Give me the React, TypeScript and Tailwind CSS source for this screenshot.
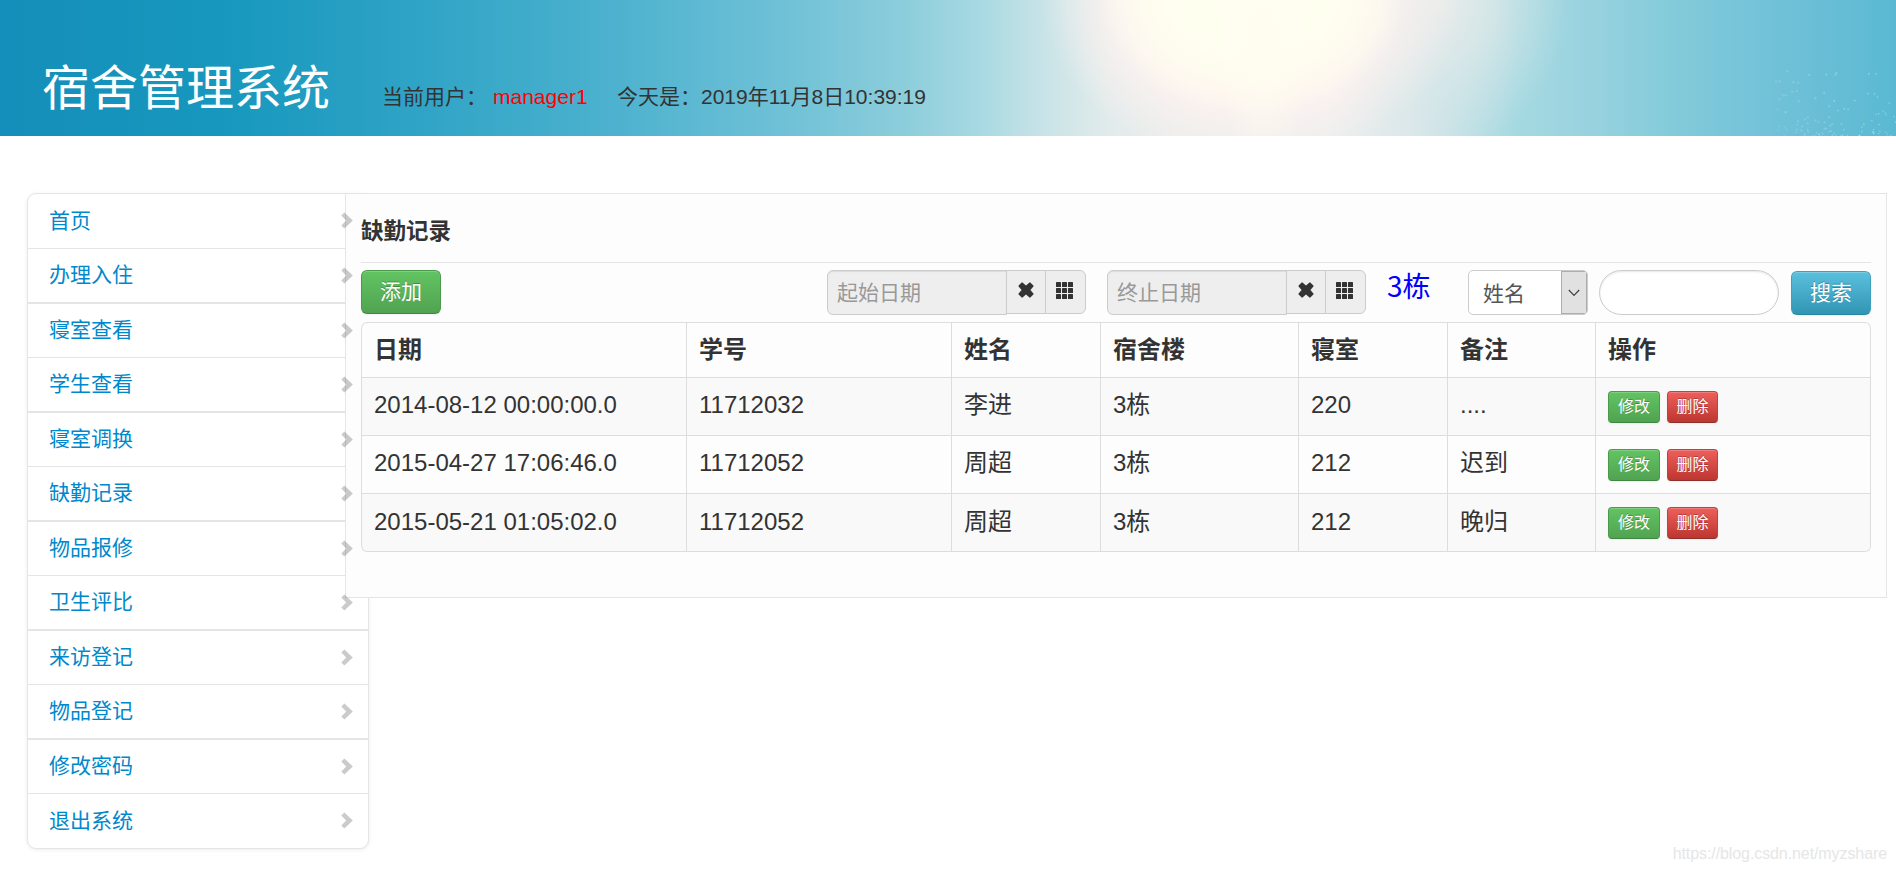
import React from 'react';

const menuItems = [
  '首页', '办理入住', '寝室查看', '学生查看', '寝室调换', '缺勤记录',
  '物品报修', '卫生评比', '来访登记', '物品登记', '修改密码', '退出系统',
];

const records = [
  { date: '2014-08-12 00:00:00.0', no: '11712032', name: '李进', building: '3栋', room: '220', note: '....' },
  { date: '2015-04-27 17:06:46.0', no: '11712052', name: '周超', building: '3栋', room: '212', note: '迟到' },
  { date: '2015-05-21 01:05:02.0', no: '11712052', name: '周超', building: '3栋', room: '212', note: '晚归' },
];

const columns = ['日期', '学号', '姓名', '宿舍楼', '寝室', '备注', '操作'];

// Water spray in the lower right corner of the banner
const spray = Array.from({ length: 150 }, (_, i) => {
  const a = Math.abs((Math.sin(i * 12.9898) * 43758.5453) % 1);
  const b = Math.abs((Math.sin(i * 78.233) * 12543.123) % 1);
  const y = 137 - b * b * b * b * 66;
  return { x: 1896 - a * 120, y, r: 0.7 + a * b * 0.8, o: 0.15 + (1 - a) * 0.4 };
});

const BannerArt = () => (
  <svg className="absolute inset-0" width="1896" height="136" viewBox="0 0 1896 136">
    <defs>
      <linearGradient id="sky" gradientUnits="userSpaceOnUse" x1="0" y1="0" x2="1896" y2="0">
        <stop offset="0" stopColor="#148eba" />
        <stop offset="0.12" stopColor="#1898be" />
        <stop offset="0.2" stopColor="#2aa1c4" />
        <stop offset="0.32" stopColor="#4bb1ce" />
        <stop offset="0.42" stopColor="#72c2d7" />
        <stop offset="0.475" stopColor="#8bcddb" />
        <stop offset="0.51" stopColor="#a2d7e1" />
        <stop offset="0.55" stopColor="#c8e3e7" />
        <stop offset="0.585" stopColor="#e2ebeb" />
        <stop offset="0.62" stopColor="#eaedec" />
        <stop offset="0.7" stopColor="#eceeee" />
        <stop offset="0.745" stopColor="#dce8ea" />
        <stop offset="0.775" stopColor="#bfe0e5" />
        <stop offset="0.8" stopColor="#a5d9e1" />
        <stop offset="0.84" stopColor="#98d2df" />
        <stop offset="0.88" stopColor="#84cbda" />
        <stop offset="0.92" stopColor="#76c4d9" />
        <stop offset="0.96" stopColor="#69bed6" />
        <stop offset="1" stopColor="#5ab9d2" />
      </linearGradient>
      <radialGradient id="sun">
        <stop offset="0" stopColor="#fffff0" />
        <stop offset="0.5" stopColor="#fffff0" />
        <stop offset="0.8" stopColor="#fffff0" stopOpacity="0.55" />
        <stop offset="1" stopColor="#fffff0" stopOpacity="0" />
      </radialGradient>
      <radialGradient id="glow">
        <stop offset="0" stopColor="#fff3f0" />
        <stop offset="0.6" stopColor="#fff3f0" stopOpacity="0.9" />
        <stop offset="0.8" stopColor="#fff3f0" stopOpacity="0.45" />
        <stop offset="1" stopColor="#fff3f0" stopOpacity="0" />
      </radialGradient>
      <radialGradient id="haze">
        <stop offset="0" stopColor="#e6ebea" />
        <stop offset="0.4" stopColor="#dfe9e9" stopOpacity="0.75" />
        <stop offset="1" stopColor="#d5e6e9" stopOpacity="0" />
      </radialGradient>
      <radialGradient id="beam">
        <stop offset="0" stopColor="#fffcf0" stopOpacity="0.8" />
        <stop offset="1" stopColor="#fffcf0" stopOpacity="0" />
      </radialGradient>
    </defs>
    <rect width="1896" height="136" fill="url(#sky)" />
    <ellipse cx="1440" cy="0" rx="130" ry="150" fill="url(#haze)" />
    <ellipse cx="1252" cy="0" rx="210" ry="165" fill="url(#glow)" />
    <ellipse cx="1252" cy="-10" rx="155" ry="125" fill="url(#sun)" />
    <ellipse cx="1264" cy="60" rx="45" ry="110" fill="url(#beam)" />
    {spray.map((s, i) => (
      <circle key={i} cx={s.x} cy={s.y} r={s.r} fill="#c5ebf2" opacity={s.o} />
    ))}
  </svg>
);

const ChevronIcon = () => (
  <svg width="12" height="17" viewBox="0 0 12 17" className="relative z-20 opacity-20">
    <path d="M0.3 3.6 3.4 0.4 11.8 8.5 3.4 16.6 0.3 13.4 5.2 8.5z" fill="#000" />
  </svg>
);

const RemoveIcon = () => (
  <svg width="16" height="16" viewBox="0 0 16 16">
    <path
      d="M4 1.2 8 4.6 12 1.2 14.8 4 11.4 8 14.8 12 12 14.8 8 11.4 4 14.8 1.2 12 4.6 8 1.2 4z"
      fill="#333"
      stroke="#333"
      strokeWidth="1.6"
      strokeLinejoin="round"
    />
  </svg>
);

const GridIcon = () => (
  <svg width="17" height="17" viewBox="0 0 17 17" fill="#333">
    {[0, 6, 12].map(y => [0, 6, 12].map(x => <rect key={`${x}-${y}`} x={x} y={y} width="5" height="5" rx="0.6" />))}
  </svg>
);

const DateField = ({ placeholder }: { placeholder: string }) => (
  <div className="flex items-start">
    <input
      readOnly
      placeholder={placeholder}
      className="w-[180px] h-[45px] pl-[9px] rounded-l-md border border-[#ccc] bg-[#eee] text-[21px] placeholder:text-[#999] shadow-[inset_0_1px_1px_rgba(0,0,0,0.08)] outline-none"
    />
    <span className="w-10 h-11 -ml-px flex justify-center pt-[11px] border border-[#ccc] bg-[#eee]"><RemoveIcon /></span>
    <span className="w-[41px] h-11 -ml-px flex pl-[10px] pt-[11px] rounded-r-md border border-[#ccc] bg-[#eee]"><GridIcon /></span>
  </div>
);

const buttonBase = 'text-white border [text-shadow:0_-1px_0_rgba(0,0,0,0.25)] shadow-[inset_0_1px_0_rgba(255,255,255,0.2),0_1px_2px_rgba(0,0,0,0.05)]';
const green = 'bg-linear-to-b from-[#62c462] to-[#51a351] border-[#4b9a4b] border-b-[#3f8640]';
const red = 'bg-linear-to-b from-[#ee5f5b] to-[#bd362f] border-[#bb4440] border-b-[#8f2f2b]';
const blue = 'bg-linear-to-b from-[#5bc0de] to-[#2f96b4] border-[#3fa0bd] border-b-[#2a85a0]';

export default function App() {
  return (
    <div className="relative w-[1896px] h-[872px] overflow-hidden bg-white text-[#333] font-['Liberation_Sans','Noto_Sans_CJK_SC',sans-serif]">
      <header className="relative h-[136px]">
        <BannerArt />
        <div className="relative flex items-start pl-[42px] whitespace-nowrap">
          <h1 className="w-[340px] mt-[59px] text-5xl leading-[60px] text-white">宿舍管理系统</h1>
          <p className="w-[111px] mt-[82px] text-[21px] leading-[30px]">当前用户：</p>
          <p className="w-[124px] mt-[82px] text-[21px] leading-[30px] text-[#f00]">manager1</p>
          <p className="mt-[82px] text-[21px] leading-[30px]">今天是：2019年11月8日10:39:19</p>
        </div>
      </header>

      <div className="flex items-start pt-[57px] pl-[27px]">
        {/* Side menu */}
        <ul className="w-[342px] shrink-0 rounded-[9px] border border-[#e5e5e5] bg-white shadow-[0_1px_4px_rgba(0,0,0,0.07)]">
          {menuItems.map((item, i) => (
            <li
              key={item}
              className={`flex items-center justify-between pl-[21px] pr-[15px] pb-px border-[#e5e5e5] text-[21px] text-[#08c] ${
                i === 0 ? 'h-[55px] border-b' : i === 11 ? 'h-[54px]' : i % 2 ? 'h-[55px] border-b-2' : 'h-[54px] border-b'
              }`}
            >
              <a>{item}</a>
              <ChevronIcon />
            </li>
          ))}
        </ul>

        {/* Records panel, slightly over the menu's right edge */}
        <main className="relative z-10 -ml-[24px] w-[1542px] h-[405px] px-[15px] border border-[#e5e5e5] bg-[#fdfdfd]">
          <h2 className="h-[69px] pt-[22px] border-b border-[#e5e5e5] text-[22.5px] leading-[32px] font-bold">缺勤记录</h2>

          <div className="flex items-start pt-[7px] h-[59px]">
            <button className={`w-20 h-11 mr-[386px] rounded-md text-[21px] ${buttonBase} ${green}`}>添加</button>
            <DateField placeholder="起始日期" />
            <div className="w-[21px]" />
            <DateField placeholder="终止日期" />
            <span className="w-[81px] ml-[21px] -mt-px text-[28px] leading-8 text-[#00f] font-['Noto_Sans_CJK_SC',sans-serif]">3栋</span>
            <div className="w-[120px] h-[45px] flex items-stretch rounded-[5px] border border-[#ccc] bg-white overflow-hidden">
              <span className="flex-1 pl-[14px] pt-px text-[21px] leading-[43px] text-[#555]">姓名</span>
              <span className="w-[26px] flex items-center justify-center border border-[#adadad] bg-[#e1e1e1]">
                <svg width="12" height="8" viewBox="0 0 12 8" fill="none" stroke="#444" strokeWidth="1.3">
                  <path d="M0.8 1 6 6.4 11.2 1" />
                </svg>
              </span>
            </div>
            <input className="w-[180px] h-[45px] ml-[11px] px-4 rounded-full border border-[#ccc] bg-white shadow-[inset_0_1px_2px_rgba(0,0,0,0.1)] outline-none" />
            <button className={`w-20 h-11 ml-auto mt-px rounded-md text-[21px] ${buttonBase} ${blue}`}>搜索</button>
          </div>

          <table className="w-[1510px] table-fixed border-separate border-spacing-0 border border-l-0 border-[#ddd] rounded-md text-2xl leading-[30px]">
            <colgroup>
              <col className="w-[325px]" />
              <col className="w-[265px]" />
              <col className="w-[149px]" />
              <col className="w-[198px]" />
              <col className="w-[149px]" />
              <col className="w-[148px]" />
              <col />
            </colgroup>
            <thead>
              <tr className="h-[54px]">
                {columns.map(c => (
                  <th key={c} className="pl-3 pt-3 pb-0 align-top text-left font-bold border-l border-[#ddd] first:rounded-tl-md">{c}</th>
                ))}
              </tr>
            </thead>
            <tbody>
              {records.map((r, i) => (
                <tr key={i} className="h-[58px] odd:bg-[#f9f9f9] [&>td]:pl-3 [&>td]:pt-3 last:[&>td]:pt-[13px] [&>td]:align-top [&>td]:border-l [&>td]:border-t [&>td]:border-[#ddd] last:[&>td]:first:rounded-bl-md last:[&>td]:last:rounded-br-md">
                  <td>{r.date}</td>
                  <td>{r.no}</td>
                  <td>{r.name}</td>
                  <td>{r.building}</td>
                  <td>{r.room}</td>
                  <td>{r.note}</td>
                  <td>
                    <div className={`flex gap-[7px] ${i === 2 ? 'pt-0' : 'pt-px'}`}>
                      <button className={`w-[52px] h-8 rounded text-base leading-none ${buttonBase} ${green}`}>修改</button>
                      <button className={`w-[51px] h-8 rounded text-base leading-none ${buttonBase} ${red}`}>删除</button>
                    </div>
                  </td>
                </tr>
              ))}
            </tbody>
          </table>
        </main>
      </div>

      <span className="absolute right-[9px] bottom-[6px] text-base leading-6 tracking-[-0.09px] text-[#e6e6e6]">https://blog.csdn.net/myzshare</span>
    </div>
  );
}
